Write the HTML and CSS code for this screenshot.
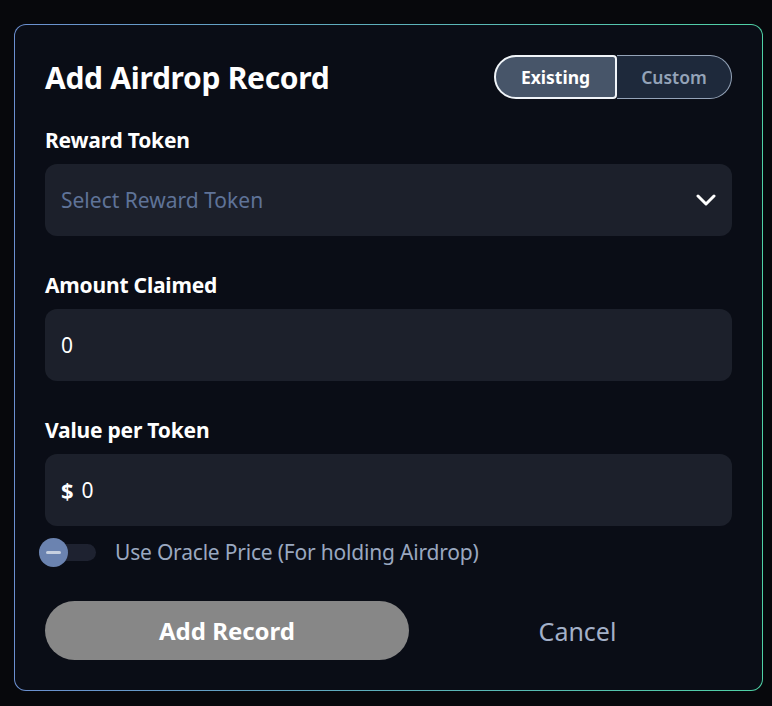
FILE: index.html
```html
<!DOCTYPE html>
<html>
<head>
<meta charset="utf-8">
<link rel="stylesheet" href="styles.css">
</head>
<body>
<div class="card">
  <div class="header">
    <h1 class="title">Add Airdrop Record</h1>
    <div class="seg">
      <button class="seg-btn active">Existing</button>
      <button class="seg-btn">Custom</button>
    </div>
  </div>

  <div class="field first">
    <label class="label">Reward Token</label>
    <div class="input select">
      <span class="placeholder">Select Reward Token</span>
      <svg class="chev" width="20" height="12" viewBox="0 0 20 12"><path d="M2 2 L10 10 L18 2" fill="none" stroke="#fff" stroke-width="3" stroke-linecap="round" stroke-linejoin="round"/></svg>
    </div>
  </div>

  <div class="field">
    <label class="label">Amount Claimed</label>
    <div class="input"><span class="value">0</span></div>
  </div>

  <div class="field">
    <label class="label">Value per Token</label>
    <div class="input"><span class="dollar">$</span><span class="value">0</span></div>
  </div>

  <div class="switch-row">
    <div class="switch"><span class="knob"></span></div>
    <span class="switch-label">Use Oracle Price (For holding Airdrop)</span>
  </div>

  <div class="actions">
    <button class="btn-primary">Add Record</button>
    <button class="btn-cancel">Cancel</button>
  </div>
</div>
</body>
</html>
```

FILE: styles.css
```css
* { box-sizing: border-box; }
html, body { margin: 0; padding: 0; }
body {
  background: #07080c;
  font-family: "Noto Sans", Lato, sans-serif;
  width: 772px;
  height: 706px;
  padding: 24px 9px 0 14px;
}
.card {
  width: 749px;
  height: 667px;
  border: 1px solid transparent;
  border-radius: 12px;
  background:
    linear-gradient(#0a0d16, #0a0d16) padding-box,
    linear-gradient(90deg, #6b8fd0, #4fd1a5) border-box;
  padding: 26px 30px 0 30px;
}
.header {
  display: flex;
  justify-content: space-between;
  align-items: center;
  height: 52px;
}
.title {
  margin: 0;
  color: #fff;
  font-size: 30px;
  font-weight: 700;
  letter-spacing: -0.3px;
}
.seg {
  display: flex;
  height: 44px;
}
.seg-btn {
  font-family: inherit;
  font-size: 17.5px;
  font-weight: 600;
  border: 1px solid #94a3b8;
  background: #1e293b;
  color: #94a3b8;
  width: 115px;
  border-left: none;
  border-radius: 0 22px 22px 0;
  padding: 0;
}
.seg-btn.active {
  width: 123px;
  border: 2px solid #f1f5f9;
  background: #475569;
  color: #fff;
  font-weight: 700;
  border-radius: 22px 4px 4px 22px;
}
.field { margin-top: 36px; }
.field.first { margin-top: 24px; }
.label {
  display: block;
  color: #fff;
  font-size: 21px;
  font-weight: 700;
  line-height: 26px;
  letter-spacing: -0.2px;
  margin-bottom: 11px;
}
.input {
  height: 72px;
  border-radius: 12px;
  background: #1c202b;
  display: flex;
  align-items: center;
  padding: 0 16px;
  font-size: 21px;
}
.select { justify-content: space-between; }
.placeholder { color: #5f7398; }
.chev { margin-right: 0; }
.value { color: #fff; }
.dollar { color: #fff; font-weight: 700; margin-right: 8px; font-size: 22px; }
.switch-row {
  display: flex;
  align-items: center;
  margin-top: 9px;
  height: 34px;
  margin-left: -6px;
}
.switch {
  position: relative;
  width: 57px;
  height: 17px;
  border-radius: 9px;
  background: #1e2230;
}
.knob {
  position: absolute;
  left: 0;
  top: -6px;
  width: 29px;
  height: 29px;
  border-radius: 50%;
  background: #6b83b0;
}
.knob::after {
  content: "";
  position: absolute;
  left: 7px;
  right: 7px;
  top: 13px;
  height: 3px;
  background: #c7d0e0;
  border-radius: 2px;
}
.switch-label {
  margin-left: 19px;
  color: #9aa8c0;
  font-size: 21px;
  letter-spacing: -0.2px;
}
.actions {
  display: flex;
  align-items: center;
  margin-top: 32px;
}
.btn-primary {
  width: 364px;
  height: 59px;
  border-radius: 30px;
  border: none;
  background: #878787;
  color: #fff;
  font-family: inherit;
  font-size: 24px;
  font-weight: 700;
}
.btn-cancel {
  flex: 1;
  background: none;
  border: none;
  color: #a3b0c8;
  font-family: inherit;
  font-size: 25px;
  height: 59px;
  padding: 0 0 0 14px;
}
```
